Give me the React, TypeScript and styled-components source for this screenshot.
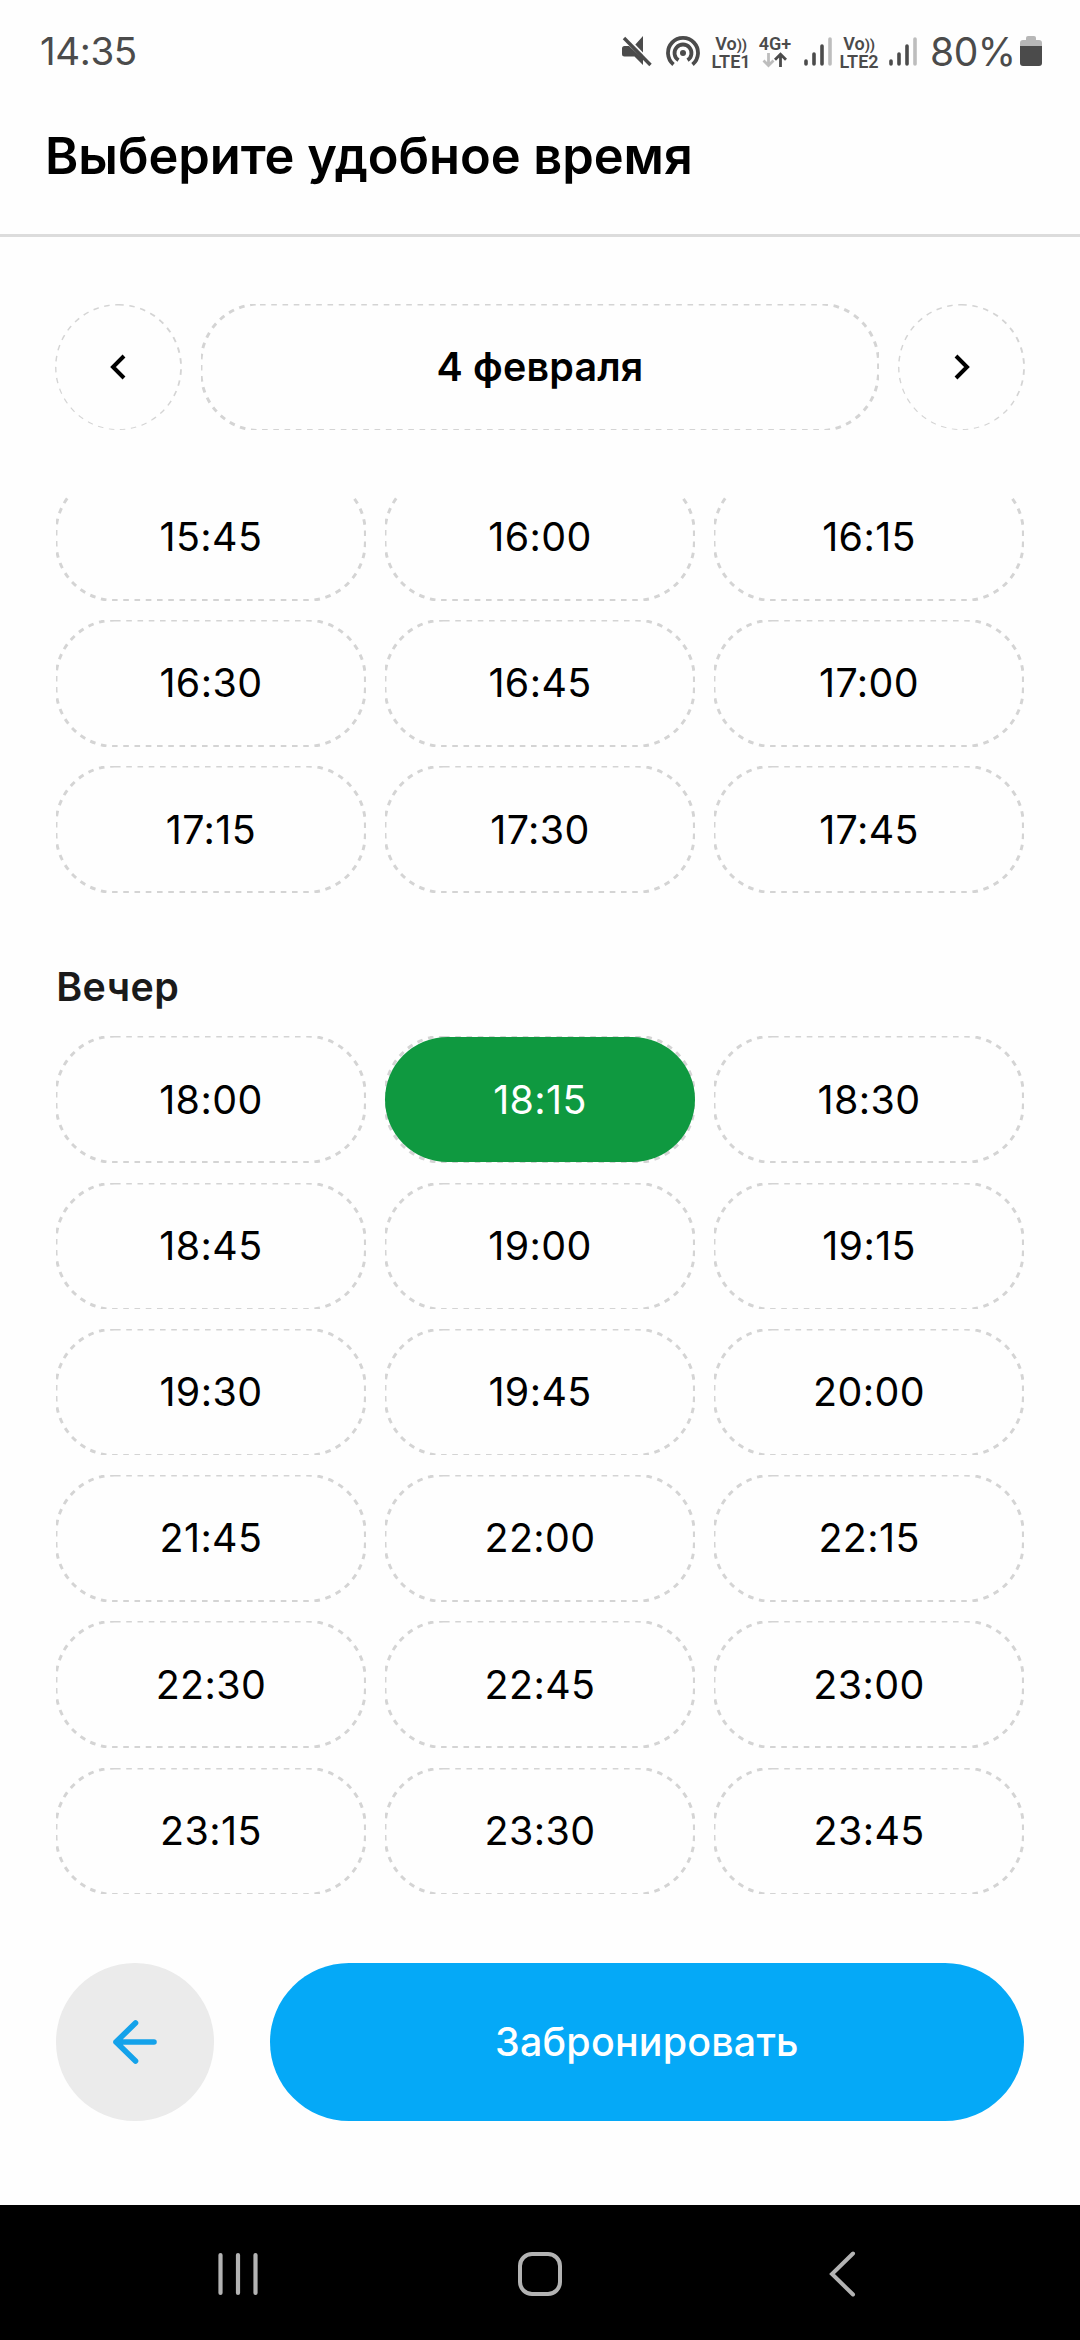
import React, { useState } from "react";
import styled, { createGlobalStyle } from "styled-components";

const GlobalStyle = createGlobalStyle`
  * { box-sizing: border-box; }
  body { margin: 0; background: #fff; }
  button { font: inherit; color: inherit; padding: 0; margin: 0; background: none; border: 0; cursor: pointer; }
`;

const Screen = styled.div`
  display: flex;
  flex-direction: column;
  width: 1080px;
  height: 2340px;
  overflow: hidden;
  background: #fefefe;
  color: #000;
  font-family: Inter, "Noto Sans", sans-serif;
`;

const StatusBar = styled.div`
  display: flex;
  align-items: center;
  height: 102px;
  padding: 0 38px 0 40px;
  color: #4b4b4b;
`;

const Clock = styled.span`
  flex: 1;
  font-size: 38.5px;
  letter-spacing: -0.4px;
  line-height: 1;
`;

const StatusIcons = styled.div`
  display: flex;
  align-items: center;
`;

const StatusGlyph = styled.svg<{ $gap?: number }>`
  display: block;
  flex: none;
  margin-left: ${(p) => p.$gap ?? 0}px;
`;

const NetworkLabel = styled.div<{ $width: number; $gap: number }>`
  display: flex;
  flex-direction: column;
  align-items: center;
  width: ${(p) => p.$width}px;
  height: 34px;
  margin: 1px 0 0 ${(p) => p.$gap}px;
  font-family: Roboto, sans-serif;
  font-size: 18px;
  font-weight: 600;
  line-height: 17px;
  white-space: nowrap;
`;

const Waves = styled.span`
  font-size: 15px;
  font-weight: 700;
  letter-spacing: -0.3px;
  line-height: 1;
`;

const BatteryText = styled.span`
  width: 85px;
  margin-left: 13px;
  font-size: 39px;
  line-height: 1;
  letter-spacing: -0.5px;
  white-space: nowrap;
`;

const Header = styled.header`
  display: flex;
  align-items: center;
  height: 135px;
  padding: 0 45px 25px;
  border-bottom: 3px solid #dcdcdc;
`;

const Title = styled.h1`
  margin: 0;
  font-size: 50.6px;
  font-weight: 600;
  line-height: 60px;
  letter-spacing: -0.05px;
`;

const DateNav = styled.nav`
  display: flex;
  gap: 19.7px;
  padding: 66.5px 55px 0;
`;

const PillButton = styled.button`
  position: relative;
  display: flex;
  align-items: center;
  justify-content: center;
  height: 126.56px;
  font-size: 39.4px;
`;

const RoundButton = styled(PillButton)`
  width: 126.56px;
  border-radius: 50%;
  overflow: hidden;
`;

const DateButton = styled(PillButton)`
  flex: 1;
  font-weight: 600;
  letter-spacing: 0.2px;
`;

const Outline = styled.svg`
  position: absolute;
  inset: 0;
  width: 100%;
  height: 100%;
  overflow: hidden;
  pointer-events: none;
`;

const Schedule = styled.main`
  height: 1400px;
  margin-top: 65.5px;
  padding: 0 56.25px;
  overflow: hidden;
`;

const SlotGrid = styled.div<{ $scrolled?: boolean }>`
  display: grid;
  grid-template-columns: repeat(3, 1fr);
  gap: 19.69px;
  margin-top: ${(p) => (p.$scrolled ? -21.6 : 0)}px;
`;

const SlotLabel = styled.span<{ $selected: boolean }>`
  position: relative;
  display: flex;
  flex: 1;
  align-items: center;
  justify-content: center;
  height: calc(100% - 2px);
  border-radius: 63px;
  color: ${(p) => (p.$selected ? "#fff" : "#000")};
  background: ${(p) => (p.$selected ? "#0f9940" : "transparent")};
  letter-spacing: 0.4px;
`;

const PeriodTitle = styled.h2`
  margin: 0;
  padding: 70px 0 25.5px;
  color: #1a1a1a;
  font-size: 39.4px;
  font-weight: 600;
  line-height: 48px;
  letter-spacing: 0.4px;
`;

const Actions = styled.footer`
  display: flex;
  gap: 56.25px;
  padding: 67.5px 56.25px 0;
`;

const BackButton = styled.button`
  display: flex;
  align-items: center;
  justify-content: center;
  width: 157.5px;
  height: 157.5px;
  border-radius: 50%;
  background: #ebebeb;
`;

const BookButton = styled.button`
  flex: 1;
  height: 157.5px;
  border-radius: 79px;
  background: #05a9f7;
  color: #fff;
  font-size: 39.4px;
  font-weight: 500;
  letter-spacing: 0.2px;
`;

const SystemNav = styled.div`
  display: grid;
  grid-template-columns: repeat(3, 302px);
  justify-content: center;
  place-items: center;
  height: 135px;
  margin-top: auto;
  padding: 2px 1px 0 0;
  background: #000;
`;

const afternoon = ["15:45", "16:00", "16:15", "16:30", "16:45", "17:00", "17:15", "17:30", "17:45"];
const evening = [
  "18:00", "18:15", "18:30", "18:45", "19:00", "19:15", "19:30", "19:45", "20:00",
  "21:45", "22:00", "22:15", "22:30", "22:45", "23:00", "23:15", "23:30", "23:45",
];

const DashedOutline = ({ radius = 59 }: { radius?: number }) => (
  <Outline aria-hidden="true">
    <rect width="100%" height="100%" rx={radius} fill="none" stroke="#d4d4d4" strokeWidth="2.900" strokeDasharray="5.600 5.650" />
  </Outline>
);

const MuteIcon = () => (
  <StatusGlyph width="30" height="32" viewBox="0 0 30 32">
    <path d="M21 1v19L12.500 10.500zM2.500 11H7l14 13v6l-8.500-8.500h-10Q0 21.500 0 19v-5.500Q0 11 2.500 11z" fill="#4b4b4b" />
    <path d="M4 1l24 25" stroke="#fefefe" strokeWidth="1.800" />
    <path d="M2 3l26.500 27" stroke="#4b4b4b" strokeWidth="3.400" />
  </StatusGlyph>
);

const HotspotIcon = () => (
  <StatusGlyph $gap={14} width="34" height="32" viewBox="0 0 34 32" fill="none" stroke="#4b4b4b" strokeWidth="3.800">
    <circle cx="17" cy="18" r="3" fill="#4b4b4b" stroke="none" />
    <path d="M12.500 25.200a8.500 8.500 0 1 1 9 0" />
    <path d="M7.500 29.500a15 15 0 1 1 19 0" />
  </StatusGlyph>
);

const SignalIcon = ({ gap }: { gap: number }) => (
  <StatusGlyph $gap={gap} width="28" height="32" viewBox="0 0 28 32" strokeWidth="3.600" strokeLinecap="round">
    <path d="M2 26v3M10 19v10M18 11v18" stroke="#4b4b4b" />
    <path d="M26 4v25" stroke="#bdbdbd" />
  </StatusGlyph>
);

const DataArrows = () => (
  <svg width="26" height="16" viewBox="0 0 26 16" fill="none" strokeWidth="2.800">
    <path d="M6.500 1v12M1.500 8.500l5 5 5-5" stroke="#bdbdbd" />
    <path d="M18.500 15V3M13 7.800l5.500-5.500L24 7.800" stroke="#4b4b4b" />
  </svg>
);

const BatteryIcon = () => (
  <StatusGlyph $gap={5} width="22" height="32" viewBox="0 0 22 32">
    <path d="M0 12V8q0-3 3-3h3V3q0-2 2-2h6q2 0 2 2v2h3q3 0 3 3v4z" fill="#b7b7b7" />
    <path d="M0 11h22v17q0 3-3 3H3q-3 0-3-3z" fill="#4b4b4b" />
  </StatusGlyph>
);

const Chevron = ({ flip }: { flip?: boolean }) => (
  <svg width="16" height="26" viewBox="0 0 16 26" fill="none">
    <path d={flip ? "M2 2l11 11L2 24" : "M14 2L3 13l11 11"} stroke="#000" strokeWidth="4" />
  </svg>
);

const VolteLabel = ({ line, gap }: { line: string; gap: number }) => (
  <NetworkLabel $width={38} $gap={gap}>
    <span>
      Vo<Waves>))</Waves>
    </span>
    <span>{line}</span>
  </NetworkLabel>
);

export default function App() {
  const [selected, setSelected] = useState("18:15");
  const renderSlots = (times: string[]) =>
    times.map((time) => (
      <PillButton key={time} onClick={() => setSelected(time)}>
        <DashedOutline />
        <SlotLabel $selected={time === selected}>{time}</SlotLabel>
      </PillButton>
    ));

  return (
    <Screen>
      <GlobalStyle />
      <StatusBar>
        <Clock>14:35</Clock>
        <StatusIcons>
          <MuteIcon />
          <HotspotIcon />
          <VolteLabel line="LTE1" gap={12} />
          <NetworkLabel $width={34} $gap={8}>
            <span>4G+</span>
            <DataArrows />
          </NetworkLabel>
          <SignalIcon gap={12} />
          <VolteLabel line="LTE2" gap={8} />
          <SignalIcon gap={11} />
          <BatteryText>80%</BatteryText>
          <BatteryIcon />
        </StatusIcons>
      </StatusBar>
      <Header>
        <Title>Выберите удобное время</Title>
      </Header>
      <DateNav>
        <RoundButton aria-label="Предыдущий день">
          <DashedOutline radius={63.28} />
          <Chevron />
        </RoundButton>
        <DateButton>
          <DashedOutline />
          4 февраля
        </DateButton>
        <RoundButton aria-label="Следующий день">
          <DashedOutline radius={63.28} />
          <Chevron flip />
        </RoundButton>
      </DateNav>
      <Schedule>
        <SlotGrid $scrolled>{renderSlots(afternoon)}</SlotGrid>
        <PeriodTitle>Вечер</PeriodTitle>
        <SlotGrid>{renderSlots(evening)}</SlotGrid>
      </Schedule>
      <Actions>
        <BackButton aria-label="Назад">
          <svg width="46" height="46" viewBox="0 0 46 46" fill="none" stroke="#14a2ea" strokeWidth="5.600" strokeLinecap="round" strokeLinejoin="round">
            <path d="M42 23H4M23.500 4L4 23l19.500 19" />
          </svg>
        </BackButton>
        <BookButton>Забронировать</BookButton>
      </Actions>
      <SystemNav>
        <svg width="44" height="46" viewBox="0 0 44 46" stroke="#b3b3b3" strokeWidth="4.200" strokeLinecap="round">
          <path d="M4.500 4v38M22 4v38M39.500 4v38" />
        </svg>
        <svg width="46" height="46" viewBox="0 0 46 46" fill="none">
          <rect x="3" y="3" width="40" height="40" rx="12" stroke="#b3b3b3" strokeWidth="4" />
        </svg>
        <svg width="30" height="48" viewBox="0 0 30 48" fill="none">
          <path d="M26 3.500L5 24l21 20.500" stroke="#b3b3b3" strokeWidth="4" strokeLinecap="round" />
        </svg>
      </SystemNav>
    </Screen>
  );
}
